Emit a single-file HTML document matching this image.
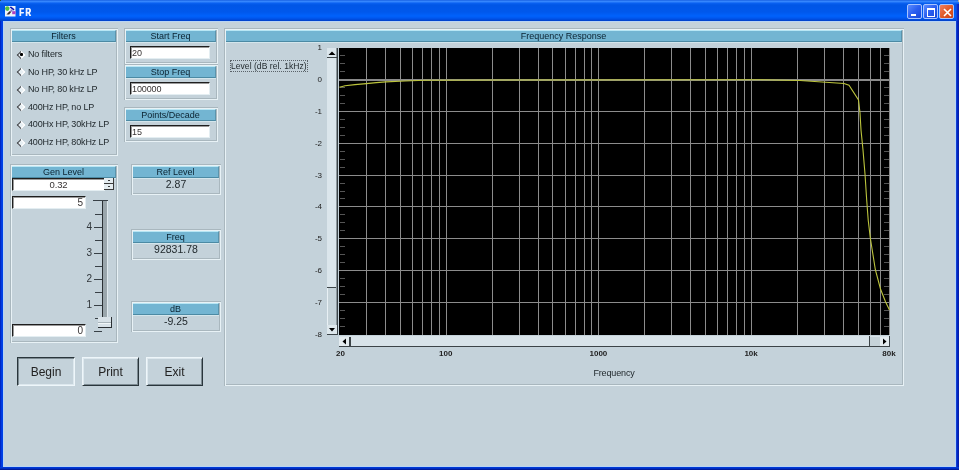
<!DOCTYPE html>
<html><head><meta charset="utf-8"><style>
*{margin:0;padding:0;box-sizing:content-box}
body{filter:blur(0.3px)}
html,body{width:959px;height:470px;overflow:hidden;background:#0030d0;font-family:"Liberation Sans",sans-serif}
div{position:absolute}
#title{left:0;top:0;width:959px;height:21px;background:linear-gradient(#0a50d8 0px,#3a8cff 1px,#2f80fb 2px,#0a62f2 3px,#0056e6 5px,#0058ec 12px,#0062fc 16px,#0058f0 18px,#0048d8 20px,#0040c4 21px)}
#frameL{left:0;top:21px;width:3px;height:449px;background:linear-gradient(90deg,#0018a8,#0038e0 1px,#0044e8)}
#frameR{left:956px;top:21px;width:3px;height:449px;background:linear-gradient(90deg,#1848e0,#0028c0 1.5px,#0818a0)}
#frameB{left:0;top:467px;width:959px;height:3px;background:linear-gradient(#0040e0,#0028b8 2px,#001080)}
#content{left:3px;top:21px;width:951px;height:444px;background:#c4d2da;border:1px solid #b8d4f4}
#ttext{left:19px;top:6px;font-size:11px;font-weight:bold;color:#f0f4ff;line-height:13px;letter-spacing:2.2px;transform:scaleX(0.7);transform-origin:0 0;text-shadow:0.6px 0 0 #f0f4ff}
.tbtn{top:4px;width:13px;height:13px;border:1px solid #a8c4ff;border-radius:2px;background:linear-gradient(135deg,#5a8cff,#2a5ef0 50%,#1848d8)}
.tbtn.cls{background:linear-gradient(135deg,#f08060,#e05a28 50%,#c84018)}
.grp{box-shadow:inset 1px 1px 0 #a9b7be,inset -1px -1px 0 #e8f2f6,inset 2px 2px 0 #e8f2f6,inset -2px -2px 0 #a9b7be}
.hdr{background:#73b5d2;border-top:1px solid #b8e6f4;box-sizing:border-box;border-bottom:1px solid #4c8aa4;border-right:1px solid #5a94ac;box-shadow:0 1px 0 #d4e6ec;text-align:center;font-size:9px;color:#0a2230;white-space:nowrap}
.lbl{font-size:9px;line-height:12px;color:#222a2e;white-space:nowrap;letter-spacing:-0.15px}
.val{font-size:10.5px;line-height:14px;color:#222a2e;text-align:center}
.inp{background:#fff;border-top:1px solid #1e1e1e;border-left:1px solid #1e1e1e;border-bottom:1px solid #e4eef2;border-right:1px solid #e4eef2;box-shadow:inset 1px 1px 0 #9a9a9a;font-size:9px;line-height:12px;color:#383434;padding-left:1px;letter-spacing:-0.1px}
.radio{width:8px;height:8px}
.radio::before{content:"";position:absolute;left:1.5px;top:1.5px;width:4px;height:4px;transform:rotate(45deg);border-left:1px solid #404448;border-bottom:1px solid #404448;border-top:1px solid #fff;border-right:1px solid #fff;background:#e8f0f4}
.spin{width:9px;height:5px;background:#e4ecf0;border-right:1px solid #3a3a3a;border-bottom:1px solid #3a3a3a}
.spin::after{content:"";position:absolute;left:4px;top:2px;width:2px;height:1px;background:#3a3a3a}
#thumb{left:98px;top:317px;width:13px;height:10px;background:#d8e2e8;border-right:1px solid #2a3034;border-bottom:1px solid #2a3034}
.btn{background:#c4d2da;text-align:center;font-size:12px;color:#222;border-top:1px solid #eef6fa;border-left:1px solid #eef6fa;border-right:1px solid #2a363c;border-bottom:1px solid #2a363c;box-sizing:border-box;box-shadow:inset 1px 1px 0 #dde8ee,inset -1px -1px 0 #7d8b92}
.btn.dn{border-top-color:#2a363c;border-left-color:#2a363c;border-right-color:#eef6fa;border-bottom-color:#eef6fa;box-shadow:inset 1px 1px 0 #7d8b92,inset -1px -1px 0 #dde8ee}
.axl{font-size:8px;line-height:10px;color:#222}
.sll{font-size:10px;line-height:12px;color:#30363a}
.axb{font-size:8px;line-height:10px;color:#222;font-weight:bold}
</style></head>
<body>
<div id="title"></div>
<div id="frameL"></div><div id="frameR"></div><div id="frameB"></div>
<div style="left:956px;top:4px;width:3px;height:17px;background:linear-gradient(90deg,#1a50e8,#0830c8 1.5px,#0820b0)"></div>
<div style="left:0;top:0;width:1px;height:1px;background:#284838"></div><div style="left:958px;top:0;width:1px;height:2px;background:#a8b0a0"></div>
<div id="content"></div>
<svg style="position:absolute;left:5px;top:6px" width="11" height="11" viewBox="0 0 11 11">
<rect x="0" y="0" width="10.5" height="10.5" fill="#f0f4fa"/>
<ellipse cx="2.3" cy="2.6" rx="2.2" ry="2.3" fill="#50c040"/>
<path d="M4.5 1.2 L6 0.6 L9.5 3.2 L8.6 4.4 Z" fill="#0a10b0"/>
<path d="M1.5 8.5 L4.5 5.2 L6.5 5.6 L4.2 8.6 Z" fill="#402a30"/>
<rect x="7.2" y="5.2" width="3.3" height="3" fill="#b040c0"/>
<rect x="5.5" y="3.5" width="2" height="2" fill="#8070c0"/>
</svg>
<div id="ttext">FR</div>
<div class="tbtn" style="left:907px"><div style="position:absolute;left:3px;top:9px;width:5px;height:2px;background:#fff"></div></div>
<div class="tbtn" style="left:923px"><div style="position:absolute;left:3px;top:3px;width:6px;height:6px;border:1px solid #fff;border-top-width:2px"></div></div>
<div class="tbtn cls" style="left:939px"><svg style="position:absolute;left:0;top:0" width="15" height="15"><path d="M4 4 L11 11 M11 4 L4 11" stroke="#fff" stroke-width="1.6"/></svg></div>
<div class="grp" style="left:10px;top:28px;width:108px;height:128px;"></div>
<div class="hdr" style="left:12px;top:30px;width:104px;height:12px;line-height:10px">Filters</div>
<div class="radio" style="left:16px;top:50.0px"></div>
<div style="position:absolute;left:20px;top:53.0px;width:2.5px;height:2.5px;background:#000;border-radius:1px"></div>
<div class="lbl" style="left:28px;top:48.0px">No filters</div>
<div class="radio" style="left:16px;top:67.6px"></div>
<div class="lbl" style="left:28px;top:65.6px">No HP, 30 kHz LP</div>
<div class="radio" style="left:16px;top:85.2px"></div>
<div class="lbl" style="left:28px;top:83.2px">No HP, 80 kHz LP</div>
<div class="radio" style="left:16px;top:102.8px"></div>
<div class="lbl" style="left:28px;top:100.8px">400Hz HP, no LP</div>
<div class="radio" style="left:16px;top:120.4px"></div>
<div class="lbl" style="left:28px;top:118.4px">400Hx HP, 30kHz LP</div>
<div class="radio" style="left:16px;top:138.0px"></div>
<div class="lbl" style="left:28px;top:136.0px">400Hz HP, 80kHz LP</div>
<div class="grp" style="left:124px;top:28px;width:94px;height:36px;"></div>
<div class="hdr" style="left:126px;top:30px;width:90px;height:12px;line-height:10px">Start Freq</div>
<div class="inp" style="left:130px;top:46px;width:77px;height:11px">20</div>
<div class="grp" style="left:124px;top:64px;width:94px;height:36px;"></div>
<div class="hdr" style="left:126px;top:66px;width:90px;height:12px;line-height:10px">Stop Freq</div>
<div class="inp" style="left:130px;top:82px;width:77px;height:11px">100000</div>
<div class="grp" style="left:124px;top:107px;width:94px;height:35px;"></div>
<div class="hdr" style="left:126px;top:109px;width:90px;height:12px;line-height:10px">Points/Decade</div>
<div class="inp" style="left:130px;top:125px;width:77px;height:11px">15</div>
<div class="grp" style="left:10px;top:164px;width:108px;height:179px;"></div>
<div class="hdr" style="left:12px;top:166px;width:104px;height:12px;line-height:10px">Gen Level</div>
<div class="inp" style="left:12px;top:178px;width:91px;height:11px;text-align:center;padding-left:0;font-size:9.5px">0.32</div>
<div class="spin" style="left:104px;top:178px"></div><div class="spin" style="left:104px;top:184px"></div>
<div class="inp" style="left:12px;top:196px;width:70px;height:11px;text-align:right;padding-left:0;padding-right:2px;font-size:10px">5</div>
<div class="inp" style="left:12px;top:324px;width:70px;height:11px;text-align:right;padding-left:0;padding-right:2px;font-size:10px">0</div>
<div style="position:absolute;left:102px;top:200px;width:1px;height:125px;background:#2a3034"></div>
<div style="position:absolute;left:103px;top:201px;width:4px;height:124px;background:#9aa6ac"></div>
<div style="position:absolute;left:107px;top:201px;width:1px;height:124px;background:#dfe9ee"></div>
<div style="position:absolute;left:102px;top:200px;width:6px;height:1px;background:#384046"></div>
<div style="position:absolute;left:94px;top:331px;width:8px;height:1px;background:#384046"></div>
<div style="position:absolute;left:95px;top:318px;width:7px;height:1px;background:#384046"></div>
<div style="position:absolute;left:94px;top:305px;width:8px;height:1px;background:#384046"></div>
<div class="sll" style="left:80px;top:298.9px;width:12px;text-align:right">1</div>
<div style="position:absolute;left:95px;top:292px;width:7px;height:1px;background:#384046"></div>
<div style="position:absolute;left:94px;top:279px;width:8px;height:1px;background:#384046"></div>
<div class="sll" style="left:80px;top:272.8px;width:12px;text-align:right">2</div>
<div style="position:absolute;left:95px;top:266px;width:7px;height:1px;background:#384046"></div>
<div style="position:absolute;left:94px;top:253px;width:8px;height:1px;background:#384046"></div>
<div class="sll" style="left:80px;top:246.7px;width:12px;text-align:right">3</div>
<div style="position:absolute;left:95px;top:240px;width:7px;height:1px;background:#384046"></div>
<div style="position:absolute;left:94px;top:227px;width:8px;height:1px;background:#384046"></div>
<div class="sll" style="left:80px;top:220.6px;width:12px;text-align:right">4</div>
<div style="position:absolute;left:95px;top:214px;width:7px;height:1px;background:#384046"></div>
<div style="position:absolute;left:93px;top:200px;width:9px;height:1px;background:#384046"></div>
<div id="thumb"><div style="left:0;top:5px;width:13px;height:1px;background:#a8b4ba"></div><div style="left:0;top:6px;width:13px;height:1px;background:#f0f6f8"></div></div>
<div class="grp" style="left:131px;top:164px;width:90px;height:31px;"></div>
<div class="hdr" style="left:133px;top:166px;width:86px;height:12px;line-height:10px">Ref Level</div>
<div class="val" style="left:133px;top:177px;width:86px">2.87</div>
<div class="grp" style="left:131px;top:229px;width:90px;height:31px;"></div>
<div class="hdr" style="left:133px;top:231px;width:86px;height:12px;line-height:10px">Freq</div>
<div class="val" style="left:133px;top:242px;width:86px">92831.78</div>
<div class="grp" style="left:131px;top:301px;width:90px;height:31px;"></div>
<div class="hdr" style="left:133px;top:303px;width:86px;height:12px;line-height:10px">dB</div>
<div class="val" style="left:133px;top:314px;width:86px">-9.25</div>
<div class="btn dn" style="left:17px;top:357px;width:58px;height:29px;line-height:29px">Begin</div>
<div class="btn" style="left:82px;top:357px;width:57px;height:29px;line-height:29px">Print</div>
<div class="btn" style="left:146px;top:357px;width:57px;height:29px;line-height:29px">Exit</div>
<div class="grp" style="left:224px;top:28px;width:680px;height:358px;"></div>
<div class="hdr" style="left:226px;top:30px;width:676px;height:12px;line-height:10px">Frequency Response</div>
<div class="lbl" style="left:230px;top:60px;width:76px;height:10px;border:1px dotted #5a6268;line-height:10px;font-size:8.5px;padding-left:0px;letter-spacing:0.05px">Level (dB rel. 1kHz)</div>
<svg style="position:absolute;left:339px;top:48px" width="551" height="287" viewBox="339 48 551 287" shape-rendering="crispEdges">
<rect x="339" y="48" width="551" height="287" fill="#000"/>
<line x1="366.5" y1="48" x2="366.5" y2="335" stroke="#8c8c8c" stroke-width="1"/>
<line x1="385.5" y1="48" x2="385.5" y2="335" stroke="#8c8c8c" stroke-width="1"/>
<line x1="400.5" y1="48" x2="400.5" y2="335" stroke="#8c8c8c" stroke-width="1"/>
<line x1="412.5" y1="48" x2="412.5" y2="335" stroke="#8c8c8c" stroke-width="1"/>
<line x1="422.5" y1="48" x2="422.5" y2="335" stroke="#8c8c8c" stroke-width="1"/>
<line x1="431.5" y1="48" x2="431.5" y2="335" stroke="#8c8c8c" stroke-width="1"/>
<line x1="439.5" y1="48" x2="439.5" y2="335" stroke="#8c8c8c" stroke-width="1"/>
<line x1="446.5" y1="48" x2="446.5" y2="335" stroke="#8c8c8c" stroke-width="1"/>
<line x1="492.5" y1="48" x2="492.5" y2="335" stroke="#8c8c8c" stroke-width="1"/>
<line x1="519.5" y1="48" x2="519.5" y2="335" stroke="#8c8c8c" stroke-width="1"/>
<line x1="538.5" y1="48" x2="538.5" y2="335" stroke="#8c8c8c" stroke-width="1"/>
<line x1="552.5" y1="48" x2="552.5" y2="335" stroke="#8c8c8c" stroke-width="1"/>
<line x1="565.5" y1="48" x2="565.5" y2="335" stroke="#8c8c8c" stroke-width="1"/>
<line x1="575.5" y1="48" x2="575.5" y2="335" stroke="#8c8c8c" stroke-width="1"/>
<line x1="584.5" y1="48" x2="584.5" y2="335" stroke="#8c8c8c" stroke-width="1"/>
<line x1="591.5" y1="48" x2="591.5" y2="335" stroke="#8c8c8c" stroke-width="1"/>
<line x1="598.5" y1="48" x2="598.5" y2="335" stroke="#8c8c8c" stroke-width="1"/>
<line x1="644.5" y1="48" x2="644.5" y2="335" stroke="#8c8c8c" stroke-width="1"/>
<line x1="671.5" y1="48" x2="671.5" y2="335" stroke="#8c8c8c" stroke-width="1"/>
<line x1="690.5" y1="48" x2="690.5" y2="335" stroke="#8c8c8c" stroke-width="1"/>
<line x1="705.5" y1="48" x2="705.5" y2="335" stroke="#8c8c8c" stroke-width="1"/>
<line x1="717.5" y1="48" x2="717.5" y2="335" stroke="#8c8c8c" stroke-width="1"/>
<line x1="727.5" y1="48" x2="727.5" y2="335" stroke="#8c8c8c" stroke-width="1"/>
<line x1="736.5" y1="48" x2="736.5" y2="335" stroke="#8c8c8c" stroke-width="1"/>
<line x1="744.5" y1="48" x2="744.5" y2="335" stroke="#8c8c8c" stroke-width="1"/>
<line x1="751.5" y1="48" x2="751.5" y2="335" stroke="#8c8c8c" stroke-width="1"/>
<line x1="797.5" y1="48" x2="797.5" y2="335" stroke="#8c8c8c" stroke-width="1"/>
<line x1="824.5" y1="48" x2="824.5" y2="335" stroke="#8c8c8c" stroke-width="1"/>
<line x1="843.5" y1="48" x2="843.5" y2="335" stroke="#8c8c8c" stroke-width="1"/>
<line x1="858.5" y1="48" x2="858.5" y2="335" stroke="#8c8c8c" stroke-width="1"/>
<line x1="870.5" y1="48" x2="870.5" y2="335" stroke="#8c8c8c" stroke-width="1"/>
<line x1="880.5" y1="48" x2="880.5" y2="335" stroke="#8c8c8c" stroke-width="1"/>
<line x1="889.5" y1="48" x2="889.5" y2="335" stroke="#8c8c8c" stroke-width="1"/>
<line x1="339" y1="302.5" x2="890" y2="302.5" stroke="#8c8c8c" stroke-width="1"/>
<line x1="339" y1="270.5" x2="890" y2="270.5" stroke="#8c8c8c" stroke-width="1"/>
<line x1="339" y1="238.5" x2="890" y2="238.5" stroke="#8c8c8c" stroke-width="1"/>
<line x1="339" y1="206.5" x2="890" y2="206.5" stroke="#8c8c8c" stroke-width="1"/>
<line x1="339" y1="175.5" x2="890" y2="175.5" stroke="#8c8c8c" stroke-width="1"/>
<line x1="339" y1="143.5" x2="890" y2="143.5" stroke="#8c8c8c" stroke-width="1"/>
<line x1="339" y1="111.5" x2="890" y2="111.5" stroke="#8c8c8c" stroke-width="1"/>
<line x1="340" y1="326.5" x2="345" y2="326.5" stroke="#555"/>
<line x1="884" y1="326.5" x2="889" y2="326.5" stroke="#555"/>
<line x1="340" y1="318.5" x2="345" y2="318.5" stroke="#555"/>
<line x1="884" y1="318.5" x2="889" y2="318.5" stroke="#555"/>
<line x1="340" y1="310.5" x2="345" y2="310.5" stroke="#555"/>
<line x1="884" y1="310.5" x2="889" y2="310.5" stroke="#555"/>
<line x1="340" y1="294.5" x2="345" y2="294.5" stroke="#555"/>
<line x1="884" y1="294.5" x2="889" y2="294.5" stroke="#555"/>
<line x1="340" y1="286.5" x2="345" y2="286.5" stroke="#555"/>
<line x1="884" y1="286.5" x2="889" y2="286.5" stroke="#555"/>
<line x1="340" y1="278.5" x2="345" y2="278.5" stroke="#555"/>
<line x1="884" y1="278.5" x2="889" y2="278.5" stroke="#555"/>
<line x1="340" y1="262.5" x2="345" y2="262.5" stroke="#555"/>
<line x1="884" y1="262.5" x2="889" y2="262.5" stroke="#555"/>
<line x1="340" y1="254.5" x2="345" y2="254.5" stroke="#555"/>
<line x1="884" y1="254.5" x2="889" y2="254.5" stroke="#555"/>
<line x1="340" y1="246.5" x2="345" y2="246.5" stroke="#555"/>
<line x1="884" y1="246.5" x2="889" y2="246.5" stroke="#555"/>
<line x1="340" y1="230.5" x2="345" y2="230.5" stroke="#555"/>
<line x1="884" y1="230.5" x2="889" y2="230.5" stroke="#555"/>
<line x1="340" y1="222.5" x2="345" y2="222.5" stroke="#555"/>
<line x1="884" y1="222.5" x2="889" y2="222.5" stroke="#555"/>
<line x1="340" y1="214.5" x2="345" y2="214.5" stroke="#555"/>
<line x1="884" y1="214.5" x2="889" y2="214.5" stroke="#555"/>
<line x1="340" y1="198.5" x2="345" y2="198.5" stroke="#555"/>
<line x1="884" y1="198.5" x2="889" y2="198.5" stroke="#555"/>
<line x1="340" y1="191.5" x2="345" y2="191.5" stroke="#555"/>
<line x1="884" y1="191.5" x2="889" y2="191.5" stroke="#555"/>
<line x1="340" y1="183.5" x2="345" y2="183.5" stroke="#555"/>
<line x1="884" y1="183.5" x2="889" y2="183.5" stroke="#555"/>
<line x1="340" y1="167.5" x2="345" y2="167.5" stroke="#555"/>
<line x1="884" y1="167.5" x2="889" y2="167.5" stroke="#555"/>
<line x1="340" y1="159.5" x2="345" y2="159.5" stroke="#555"/>
<line x1="884" y1="159.5" x2="889" y2="159.5" stroke="#555"/>
<line x1="340" y1="151.5" x2="345" y2="151.5" stroke="#555"/>
<line x1="884" y1="151.5" x2="889" y2="151.5" stroke="#555"/>
<line x1="340" y1="135.5" x2="345" y2="135.5" stroke="#555"/>
<line x1="884" y1="135.5" x2="889" y2="135.5" stroke="#555"/>
<line x1="340" y1="127.5" x2="345" y2="127.5" stroke="#555"/>
<line x1="884" y1="127.5" x2="889" y2="127.5" stroke="#555"/>
<line x1="340" y1="119.5" x2="345" y2="119.5" stroke="#555"/>
<line x1="884" y1="119.5" x2="889" y2="119.5" stroke="#555"/>
<line x1="340" y1="103.5" x2="345" y2="103.5" stroke="#555"/>
<line x1="884" y1="103.5" x2="889" y2="103.5" stroke="#555"/>
<line x1="340" y1="95.5" x2="345" y2="95.5" stroke="#555"/>
<line x1="884" y1="95.5" x2="889" y2="95.5" stroke="#555"/>
<line x1="340" y1="87.5" x2="345" y2="87.5" stroke="#555"/>
<line x1="884" y1="87.5" x2="889" y2="87.5" stroke="#555"/>
<line x1="340" y1="71.5" x2="345" y2="71.5" stroke="#555"/>
<line x1="884" y1="71.5" x2="889" y2="71.5" stroke="#555"/>
<line x1="340" y1="63.5" x2="345" y2="63.5" stroke="#555"/>
<line x1="884" y1="63.5" x2="889" y2="63.5" stroke="#555"/>
<line x1="340" y1="55.5" x2="345" y2="55.5" stroke="#555"/>
<line x1="884" y1="55.5" x2="889" y2="55.5" stroke="#555"/>
<rect x="339" y="79" width="551" height="2" fill="#8a8a8a"/>
<path d="M339.4 87.3 L345.0 85.8 L355.0 84.6 L366.3 83.6 L376.3 82.6 L385.7 81.9 L405.0 81.0 L425.0 80.3 L500.0 80.0 L760.0 79.8 L800.0 80.5 L822.0 82.0 L844.0 83.5 L849.0 85.3 L858.5 100.0 L860.0 113.0 L861.0 130.0 L863.0 150.0 L865.0 174.0 L866.7 200.0 L868.2 220.0 L870.3 238.0 L875.4 270.0 L880.5 289.0 L885.6 302.0 L889.5 310.0" fill="none" stroke="#bcc43c" stroke-width="1.1" shape-rendering="auto"/>
</svg>
<div class="axl" style="left:300px;top:43.3px;width:22px;text-align:right">1</div>
<div class="axl" style="left:300px;top:75.1px;width:22px;text-align:right">0</div>
<div class="axl" style="left:300px;top:106.9px;width:22px;text-align:right">-1</div>
<div class="axl" style="left:300px;top:138.8px;width:22px;text-align:right">-2</div>
<div class="axl" style="left:300px;top:170.6px;width:22px;text-align:right">-3</div>
<div class="axl" style="left:300px;top:202.4px;width:22px;text-align:right">-4</div>
<div class="axl" style="left:300px;top:234.2px;width:22px;text-align:right">-5</div>
<div class="axl" style="left:300px;top:266.1px;width:22px;text-align:right">-6</div>
<div class="axl" style="left:300px;top:297.9px;width:22px;text-align:right">-7</div>
<div class="axl" style="left:300px;top:329.7px;width:22px;text-align:right">-8</div>
<div class="axb" style="left:320.5px;top:349px;width:40px;text-align:center">20</div>
<div class="axb" style="left:425.7px;top:349px;width:40px;text-align:center">100</div>
<div class="axb" style="left:578.4px;top:349px;width:40px;text-align:center">1000</div>
<div class="axb" style="left:731.1px;top:349px;width:40px;text-align:center">10k</div>
<div class="axb" style="left:869.0px;top:349px;width:40px;text-align:center">80k</div>
<div class="lbl" style="left:560px;top:367px;width:108px;text-align:center">Frequency</div>
<div style="position:absolute;left:327px;top:48px;width:10px;height:287px;background:#dbe6ec"></div>
<div style="position:absolute;left:327px;top:288px;width:10px;height:37px;background:#c6d3d9;border-left:1px solid #e8f0f4;box-sizing:border-box"></div>
<div style="position:absolute;left:327px;top:287px;width:10px;height:1px;background:#3c4448"></div>
<div style="position:absolute;left:336px;top:48px;width:1px;height:287px;background:#8a969c"></div>
<div style="position:absolute;left:337px;top:48px;width:1px;height:287px;background:#3c4448"></div>
<div style="position:absolute;left:327px;top:57px;width:10px;height:1px;background:#3c4448"></div>
<svg style="position:absolute;left:327px;top:49px" width="10" height="8"><path d="M1.5 6 L5 2.5 L8.5 6Z" fill="#000"/></svg>
<div style="position:absolute;left:327px;top:325px;width:10px;height:10px;background:#dde7ec"></div>
<div style="position:absolute;left:327px;top:334px;width:11px;height:1px;background:#3c4448"></div>
<div style="position:absolute;left:337px;top:325px;width:1px;height:10px;background:#3c4448"></div>
<svg style="position:absolute;left:327px;top:326px" width="10" height="8"><path d="M2 2 L5 5.5 L8 2Z" fill="#000"/></svg>
<div style="position:absolute;left:339px;top:336px;width:551px;height:11px;background:#d8e3e9"></div>
<div style="position:absolute;left:339px;top:346px;width:551px;height:1px;background:#3c4448"></div>
<div style="position:absolute;left:339px;top:337px;width:10px;height:9px;background:#e4ecf0"></div>
<div style="position:absolute;left:349px;top:337px;width:1.5px;height:10px;background:#3c4448"></div>
<svg style="position:absolute;left:339px;top:337px" width="10" height="9"><path d="M3.5 4.5 L7 1.5 L7 7.5Z" fill="#000"/></svg>
<div style="position:absolute;left:869px;top:336px;width:1px;height:11px;background:#3c4448"></div>
<div style="position:absolute;left:870px;top:337px;width:10px;height:9px;background:#c6d3d9"></div>
<div style="position:absolute;left:880px;top:337px;width:9px;height:9px;background:#e4ecf0"></div>
<div style="position:absolute;left:889px;top:336px;width:1px;height:11px;background:#3c4448"></div>
<svg style="position:absolute;left:880px;top:337px" width="10" height="9"><path d="M3 1.5 L6.5 4.5 L3 7.5Z" fill="#000"/></svg>
</body></html>
